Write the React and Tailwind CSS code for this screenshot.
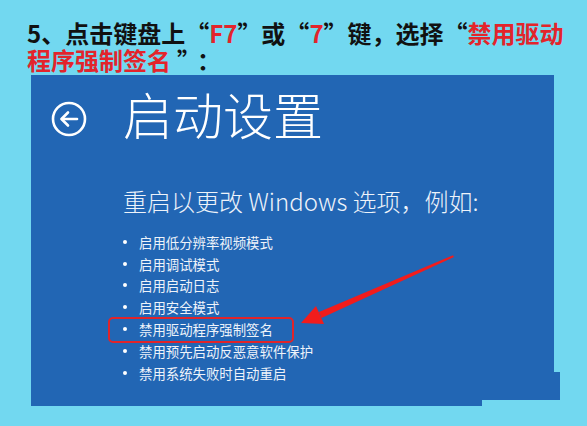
import React from "react";

const items = [
  "启用低分辨率视频模式",
  "启用调试模式",
  "启用启动日志",
  "启用安全模式",
  "禁用驱动程序强制签名",
  "禁用预先启动反恶意软件保护",
  "禁用系统失败时自动重启",
];

function BackIcon() {
  return (
    <svg width="36" height="36" viewBox="0 0 36 36" fill="none" stroke="white" strokeWidth="2.6" strokeLinecap="round" strokeLinejoin="round">
      <circle cx="18" cy="18" r="16" />
      <path d="M26 18H11" />
      <path d="M17 11.5L10.5 18L17 24.5" />
    </svg>
  );
}

export default function App() {
  return (
    <div
      className="relative w-[587px] h-[426px] overflow-hidden bg-[#72d8f0]"
      style={{ fontFamily: '"Noto Sans CJK SC", "Liberation Sans", sans-serif' }}
    >
      <div className="h-[75px] pt-[20px] pl-[27px] text-[24px] leading-[26px] font-bold text-[#111]">
        <div className="whitespace-nowrap h-[27px]">
          5、点击键盘上“<span className="text-[#e3242b]">F7</span>”或“<span className="text-[#e3242b]">7</span>”键，选择“<span className="text-[#e3242b]">禁用驱动</span>
        </div>
        <div className="whitespace-nowrap h-[26px]">
          <span className="text-[#e3242b]">程序强制签名</span>
          <span className="ml-[6px]">”</span>
          <span className="ml-[8px]">：</span>
        </div>
      </div>

      <div className="relative w-[523px] h-[331px] ml-[31px] pt-[13px] bg-[#2266b4] text-white">
        <div className="flex items-start ml-[20px]">
          <div className="mt-[13px]">
            <BackIcon />
          </div>
          <div className="ml-[36px] text-[50px] leading-[50px] font-light">启动设置</div>
        </div>

        <div className="ml-[92px] mt-[48px] text-[24px] leading-[30px] font-light text-[#eef3fa] whitespace-nowrap">
          重启以更改 Windows 选项，例如:
        </div>

        <ul className="ml-[92px] mt-[15px] text-[13.4px] text-[#eef3fa]">
          {items.map((t) => (
            <li key={t} className="flex items-center h-[21.8px] whitespace-nowrap">
              <span className="w-[4px] h-[4px] rounded-full bg-white mr-[12px]" />
              {t}
            </li>
          ))}
        </ul>

        <div className="absolute left-[77px] top-[242px] w-[186px] h-[26px] rounded-[5px] border-[2.5px] border-[#e0242a]" />

        <div className="absolute right-[-6px] top-[297px] w-[6px] h-[28px] bg-[#2266b4]" />
        <div className="absolute right-0 bottom-0 w-[72px] h-[6px] bg-[#72d8f0]" />
      </div>

      <svg className="absolute left-0 top-0 pointer-events-none" width="587" height="426" viewBox="0 0 587 426">
        <polygon points="301,323 316,306 324,324" fill="#f21c1c" />
        <polygon points="321.5,318 319,312 453,255.3 454,257" fill="#f21c1c" />
      </svg>
    </div>
  );
}
